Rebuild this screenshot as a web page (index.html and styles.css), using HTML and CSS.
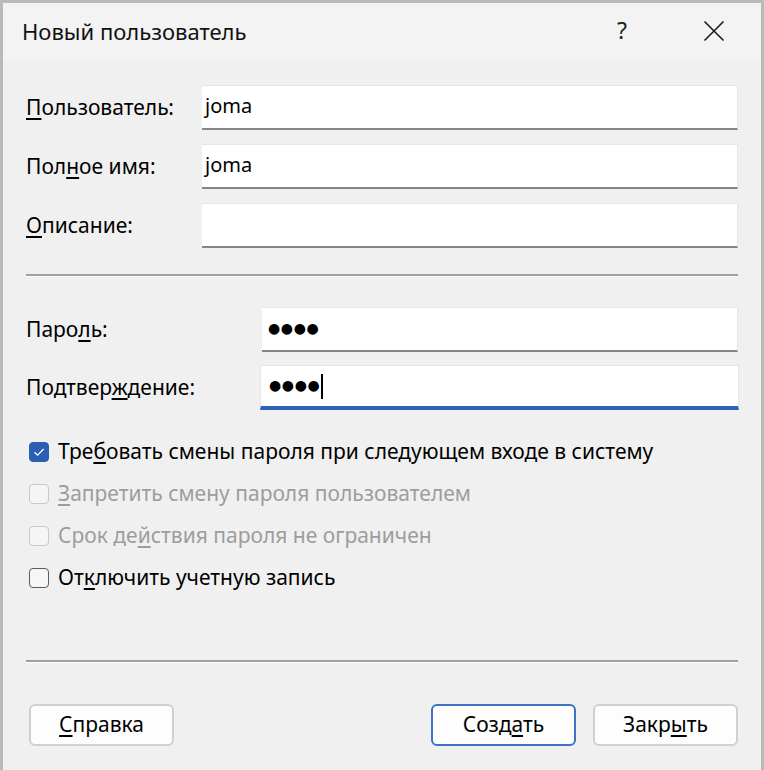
FILE: index.html
```
<!DOCTYPE html>
<html lang="ru">
<head>
<meta charset="utf-8">
<title>Новый пользователь</title>
<link rel="stylesheet" href="styles.css">
</head>
<body>
<div class="window">
  <div class="titlebar">
    <div class="title">Новый пользователь</div>
    <div class="tb-btn help">?</div>
    <div class="tb-btn close">
      <svg width="22" height="22" viewBox="0 0 22 22"><path d="M1.5 1.5 L20.5 20.5 M20.5 1.5 L1.5 20.5" stroke="#1a1a1a" stroke-width="1.6" fill="none"/></svg>
    </div>
  </div>
  <div class="content">
    <div class="group g1">
      <div class="row"><label class="lbl"><u>П</u>ользователь:</label><div class="field"><span class="val">joma</span></div></div>
      <div class="row"><label class="lbl">Пол<u>н</u>ое имя:</label><div class="field"><span class="val">joma</span></div></div>
      <div class="row"><label class="lbl"><u>О</u>писание:</label><div class="field"></div></div>
    </div>
    <div class="sep sep1"></div>
    <div class="group g2">
      <div class="row"><label class="lbl">Паро<u>л</u>ь:</label><div class="field"><span class="dots">●●●●</span></div></div>
      <div class="row"><label class="lbl">Подтвер<u>ж</u>дение:</label><div class="field focused"><span class="dots">●●●●</span><span class="caret"></span></div></div>
    </div>
    <div class="checks">
      <div class="chk"><span class="box checked"><svg width="20" height="20" viewBox="0 0 20 20"><path d="M5.5 10.2 L8.6 13.2 L14.6 7" stroke="#ffffff" stroke-width="1.3" fill="none"/></svg></span><span class="ctext">Тре<u>б</u>овать смены пароля при следующем входе в систему</span></div>
      <div class="chk disabled"><span class="box"></span><span class="ctext"><u>З</u>апретить смену пароля пользователем</span></div>
      <div class="chk disabled"><span class="box"></span><span class="ctext">Срок де<u>й</u>ствия пароля не ограничен</span></div>
      <div class="chk"><span class="box"></span><span class="ctext">От<u>к</u>лючить учетную запись</span></div>
    </div>
    <div class="sep sep2"></div>
    <div class="buttons">
      <button class="btn"><u>С</u>правка</button>
      <div class="spacer"></div>
      <button class="btn default">Созд<u>а</u>ть</button>
      <button class="btn">Закр<u>ы</u>ть</button>
    </div>
  </div>
</div>
</body>
</html>
```
FILE: styles.css
```
* { box-sizing: border-box; }
html, body { margin: 0; padding: 0; background: #f0f0f0; }
body {
  font-family: "Noto Sans", "Open Sans", sans-serif;
  font-size: 21px;
  color: #000;
}
u { text-decoration: underline; text-underline-offset: 3px; text-decoration-thickness: 1.5px; }
.window {
  width: 764px;
  height: 770px;
  border-left: 3px solid #b9b9b9;
  border-top: 3px solid #b9b9b9;
  border-right: 3px solid #b9b9b9;
  background: #f0f0f0;
  display: flex;
  flex-direction: column;
}
.titlebar {
  height: 57px;
  background: #f3f3f3;
  display: flex;
  align-items: center;
  padding-left: 19px;
}
.title {
  flex: 1;
  font-size: 22px;
  color: #111;
  padding-bottom: 2px;
}
.tb-btn {
  display: flex;
  align-items: center;
  justify-content: center;
}
.help {
  width: 20px;
  font-size: 23px;
  color: #222;
  margin-right: 71px;
  padding-bottom: 4px;
}
.close {
  width: 22px;
  margin-right: 36px;
  padding-bottom: 2px;
}
.content {
  flex: 1;
  padding: 25px 23px 0 23px;
  display: flex;
  flex-direction: column;
}
.group { display: flex; flex-direction: column; }
.g1 { gap: 14px; }
.g2 { gap: 13px; margin-top: 30px; }
.row { display: flex; align-items: center; height: 45px; }
.g1 .lbl { width: 176px; }
.g2 .lbl { width: 236px; }
.lbl { flex: none; padding-bottom: 1px; }
.field {
  flex: 1;
  height: 45px;
  background: #fff;
  border-top: 1px solid #e6e6e6;
  border-right: 1px solid #e6e6e6;
  border-bottom: 2px solid #868686;
  display: flex;
  align-items: center;
  padding-left: 3px;
}
.val { font-size: 20px; padding-bottom: 4px; }
.dots {
  font-family: "DejaVu Sans", sans-serif;
  font-size: 14px;
  letter-spacing: 0.6px;
  padding-left: 3px;
  padding-bottom: 2px;
}
.field.focused {
  border-bottom: 4px solid #2e63b8;
  margin-left: -2px;
  margin-right: -1px;
  padding-left: 5px;
  border-left: 1px solid #e6e6e6;
}
.caret {
  display: inline-block;
  width: 2px;
  height: 25px;
  background: #000;
  margin-left: 1px;
}
.sep {
  height: 3px;
  border-top: 2px solid #a0a0a0;
  border-bottom: 1px solid #fdfdfd;
}
.sep1 { margin-top: 26px; }
.sep2 { margin-top: 61px; }
.checks { margin-top: 21px; display: flex; flex-direction: column; }
.chk { height: 42px; display: flex; align-items: center; }
.box {
  width: 20px;
  height: 20px;
  border: 1px solid #5c5c5c;
  border-radius: 4px;
  background: #f6f6f6;
  margin-left: 3px;
  margin-right: 9px;
  flex: none;
  display: flex;
}
.box.checked { background: #2b5fb5; border-color: #2b5fb5; }
.box svg { margin: -1px; }
.chk.disabled .box { border-color: #c9c9c9; background: #f5f5f5; }
.chk.disabled .ctext { color: #9d9d9d; }
.ctext { padding-bottom: 3px; }
.buttons { display: flex; margin-top: 41px; padding-left: 3px; }
.spacer { flex: 1; }
.btn {
  font-family: inherit;
  font-size: 21px;
  color: #000;
  width: 145px;
  height: 42px;
  background: #fdfdfd;
  border: 2px solid #d0d0d0;
  border-radius: 6px;
  padding: 0 0 3px 0;
}
.btn + .btn { margin-left: 17px; }
.btn.default { border-color: #3a73c8; }
```
